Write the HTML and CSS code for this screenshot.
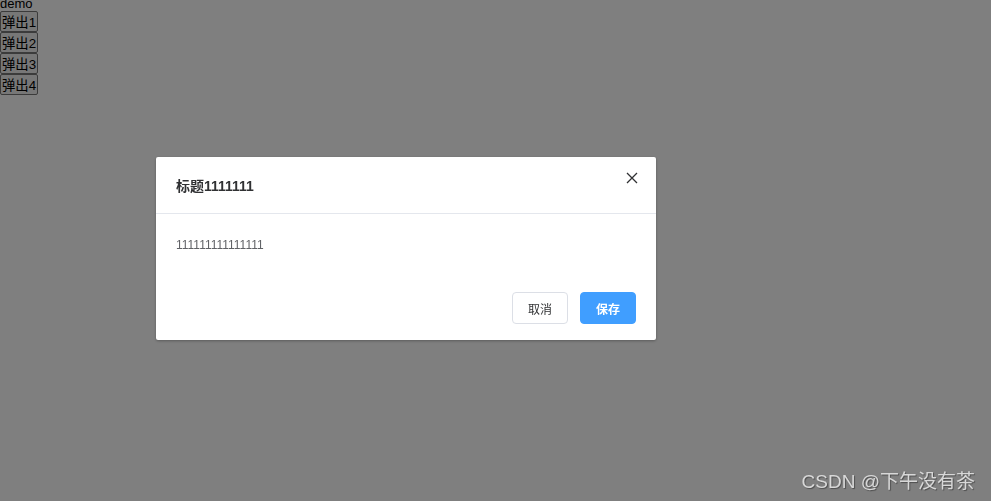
FILE: index.html
```html
<!DOCTYPE html>
<html lang="zh-CN">
<head>
  <meta charset="UTF-8">
  <title>demo</title>
  <link rel="stylesheet" href="styles.css">
</head>
<body>

<div class="demo">demo</div>
<div class="btn-list">
  <button class="open-btn">弹出1</button>
  <button class="open-btn">弹出2</button>
  <button class="open-btn">弹出3</button>
  <button class="open-btn">弹出4</button>
</div>

<div class="mask">
  <div class="dialog">
    <div class="dialog-header">
      <span class="dialog-title">标题1111111</span>
      <button class="dialog-close" aria-label="关闭">
        <svg width="12" height="12" viewBox="0 0 12 12"><path d="M1 1L11 11M11 1L1 11" stroke="#303133" stroke-width="1.3" fill="none"/></svg>
      </button>
    </div>
    <div class="dialog-body">111111111111111</div>
    <div class="dialog-footer">
      <button class="btn">取消</button>
      <button class="btn btn-primary">保存</button>
    </div>
  </div>
  <div class="watermark">CSDN @下午没有茶</div>
</div>

</body>
</html>
```

FILE: styles.css
```css
body {
  margin: 0;
  font-family: "Liberation Sans", "Noto Sans CJK SC", sans-serif;
  background: #fff;
}
.demo {
  font-size: 13px;
  line-height: 14px;
  height: 14px;
  margin-top: -3px;
}
.btn-list {
  display: flex;
  flex-direction: column;
  align-items: flex-start;
}
.open-btn {
  font-family: "Liberation Sans", "Noto Sans CJK SC", sans-serif;
  font-size: 13.33px;
  height: 21px;
  padding: 0 1px;
  color: #000;
  background: #efefef;
  border: 1px solid #767676;
  border-radius: 2px;
}
.mask {
  position: fixed;
  top: 0; left: 0;
  width: 100%; height: 100%;
  background: rgba(0,0,0,0.5);
}
.dialog {
  position: absolute;
  top: 157px;
  left: 156px;
  width: 500px;
  background: #fff;
  border-radius: 2px;
  box-shadow: 0 1px 3px rgba(0,0,0,0.3);
}
.dialog-header {
  display: flex;
  justify-content: space-between;
  align-items: flex-start;
  height: 56px;
  padding: 0 20px;
  border-bottom: 1px solid #e4e7ed;
}
.dialog-title {
  margin-top: 18px;
  font-size: 14px;
  font-weight: bold;
  color: #303133;
}
.dialog-close {
  margin-top: 15px;
  margin-right: -2px;
  padding: 0;
  border: none;
  background: none;
  width: 12px;
  height: 12px;
  cursor: pointer;
}
.dialog-body {
  padding: 24px 20px 0;
  height: 54px;
  font-size: 12px;
  color: #606266;
  box-sizing: content-box;
}
.dialog-footer {
  display: flex;
  justify-content: flex-end;
  gap: 12px;
  padding: 0 20px 16px;
}
.btn {
  width: 56px;
  height: 32px;
  font-family: "Liberation Sans", "Noto Sans CJK SC", sans-serif;
  font-size: 12px;
  color: #303133;
  background: #fff;
  border: 1px solid #dcdfe6;
  border-radius: 4px;
  cursor: pointer;
}
.btn-primary {
  color: #fff;
  background: #409eff;
  border-color: #409eff;
  font-weight: bold;
}
.watermark {
  position: absolute;
  right: 16px;
  bottom: 8px;
  font-size: 19px;
  color: #d8d8d8;
  text-shadow: 1px 1px 1px rgba(0,0,0,0.4);
}
```
